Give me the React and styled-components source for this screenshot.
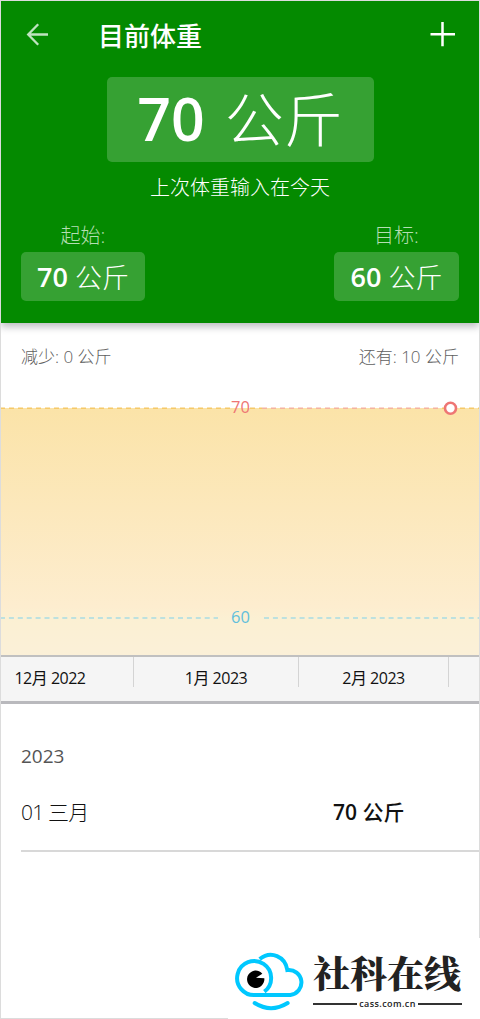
import React from 'react'
import styled, { createGlobalStyle } from 'styled-components'

const months = [
  { label: '12月 2022', width: 133, shift: 34 },
  { label: '1月 2023', width: 165, shift: 0 },
  { label: '2月 2023', width: 150, shift: 0 },
]

const App = () => {
  return (
    <>
      <GlobalStyle />
      <Screen>
        <Header>
          <TopBar>
            <svg width="24" height="26" viewBox="0 0 24 26" fill="none" stroke="#bfe3bf" strokeWidth="2.3">
              <path d="M12.2 3.3 2.2 13.5 12.2 23.8M2 13.5H22" />
            </svg>
            <Title>目前体重</Title>
            <svg width="26" height="26" viewBox="0 0 26 26" stroke="#fff" strokeWidth="2.5">
              <path d="M.5 13.2H25M12.5 1V25.2" />
            </svg>
          </TopBar>
          <CurrentWeight>
            <b>70</b><span>公斤</span>
          </CurrentWeight>
          <LastEntry>上次体重输入在今天</LastEntry>
          <Goals>
            <Goal $width="124px">
              <GoalLabel>起始:</GoalLabel>
              <GoalValue><b>70</b><span>公斤</span></GoalValue>
            </Goal>
            <Goal $width="125px">
              <GoalLabel>目标:</GoalLabel>
              <GoalValue><b>60</b><span>公斤</span></GoalValue>
            </Goal>
          </Goals>
        </Header>

        <Summary>
          <span>减少: 0 公斤</span>
          <span>还有: 10 公斤</span>
        </Summary>

        <svg width="478" height="264" viewBox="1 391 478 264" fontSize="16.5">
          <defs>
            <linearGradient id="area" x1="0" y1="0" x2="0" y2="1">
              <stop offset="0" stopColor="#fbe3a8" />
              <stop offset="0.8" stopColor="#fdedcf" />
              <stop offset="0.85" stopColor="#fbf0d3" />
              <stop offset="1" stopColor="#fbf0d8" />
            </linearGradient>
          </defs>
          <rect x="1" y="408" width="478" height="248" fill="url(#area)" />
          <path d="M0 408.3H231M250 408.3H262M442 408.3H479" stroke="#f6c968" strokeWidth="1.4" strokeDasharray="5 4" />
          <path d="M262 408.3H442" stroke="#f5b3a0" strokeWidth="1.4" strokeDasharray="5 4" />
          <path d="M0 618H218M264 618H479" stroke="#a9dbe3" strokeWidth="1.6" strokeDasharray="5 3.9" />
          <text x="240.5" y="413" textAnchor="middle" fill="#ee7674">70</text>
          <text x="240.5" y="623" textAnchor="middle" fill="#62bfdc">60</text>
          <circle cx="450.5" cy="408.2" r="5.5" fill="#fff" stroke="#ee7674" strokeWidth="2.6" />
        </svg>

        <Months>
          {months.map((m) => (
            <Month key={m.label} $width={m.width} $shift={m.shift}>{m.label}</Month>
          ))}
        </Months>

        <History>
          <Year>2023</Year>
          <Entry>
            <EntryDate>01 三月</EntryDate>
            <EntryWeight><b>70</b> 公斤</EntryWeight>
          </Entry>
        </History>

        <Watermark>
          <svg width="72" height="62" viewBox="39 60 216 186" fill="none" stroke="#00c8ff" strokeWidth="12">
            <path d="M116 87C150 60 193 80 199 120A37.500 37.500 0 0 1 208 195H104A51 51 0 1 1 130 185" />
            <path d="M101 219Q150 250 200 219" strokeLinecap="round" />
            <path d="M105 143 124 131A26 26 0 1 0 130 145Z" fill="#000" stroke="none" />
          </svg>
          <Brand>
            <BrandName>社科在线</BrandName>
            <BrandUrl>cass.com.cn</BrandUrl>
          </Brand>
        </Watermark>
      </Screen>
    </>
  )
}

const GlobalStyle = createGlobalStyle`
  * {
    box-sizing: border-box;
  }

  body {
    margin: 0;
    background: #fff;
    font-family: 'Open Sans', 'Noto Sans CJK SC', sans-serif;
  }

  svg {
    display: block;
    flex: none;
  }
`

const Screen = styled.main`
  position: relative;
  width: 480px;
  height: 1019px;
  border: 1px solid #dcdcdc;
`

const Header = styled.header`
  height: 322px;
  display: flex;
  flex-direction: column;
  align-items: center;
  color: #fff;
  background: #048a00;
  box-shadow: 0 4px 7px rgba(60, 60, 75, 0.33);
  clip-path: inset(0 0 -16px 0);
`

const TopBar = styled.div`
  width: 100%;
  height: 76px;
  padding: 20px 23px 0 25px;
  display: flex;
  align-items: flex-start;
`

const Title = styled.h1`
  flex: 1;
  margin: 1px 0 0 48px;
  font-size: 26px;
  font-weight: 500;
  line-height: 28px;
`

const CurrentWeight = styled.div`
  width: 267px;
  height: 85px;
  display: flex;
  align-items: center;
  justify-content: center;
  gap: 20px;
  background: #36a133;
  border-radius: 5px;
  font-size: 59px;
  font-weight: 300;
  line-height: 85px;

  b {
    margin-top: -2px;
    font-weight: 600;
  }
`

const LastEntry = styled.p`
  margin: 12px 0 0;
  font-size: 20px;
  font-weight: 300;
  line-height: 28px;
`

const Goals = styled.div`
  width: 100%;
  padding: 21px 20px 0;
  display: flex;
  justify-content: space-between;
`

const Goal = styled.div`
  width: ${({ $width }) => $width};
  text-align: center;
`

const GoalLabel = styled.div`
  height: 29px;
  font-size: 20px;
  font-weight: 300;
  line-height: 26px;
  color: #b4deb3;
`

const GoalValue = styled.div`
  height: 49px;
  display: flex;
  align-items: center;
  justify-content: center;
  gap: 7px;
  background: #36a133;
  border-radius: 5px;
  font-size: 27px;
  font-weight: 300;
  line-height: 49px;

  b {
    font-weight: 600;
  }

  span {
    margin-top: 1px;
  }
`

const Summary = styled.div`
  height: 68px;
  padding: 21px 20px 0;
  display: flex;
  justify-content: space-between;
  font-size: 17px;
  font-weight: 300;
  line-height: 26px;
  color: #606060;
`

const Months = styled.div`
  height: 49px;
  display: flex;
  background: #f5f5f5;
  border-top: 2px solid #c0c0c0;
  border-bottom: 3px solid #b9b9bd;
`

const Month = styled.div`
  width: ${({ $width }) => $width}px;
  height: 30px;
  padding-right: ${({ $shift }) => $shift}px;
  border-right: 1px solid #d4d4d4;
  text-align: center;
  font-size: 16px;
  line-height: 42px;
  letter-spacing: -0.5px;
  color: #111;
`

const History = styled.section`
  padding: 38px 0 0 20px;
`

const Year = styled.div`
  font-size: 19px;
  line-height: 28px;
  color: #555;
`

const Entry = styled.div`
  height: 82px;
  display: flex;
  padding-top: 28px;
  border-bottom: 2px solid #d8d8d8;
  font-size: 21px;
  line-height: 28px;
  color: #111;
`

const EntryDate = styled.span`
  width: 312px;
  font-weight: 300;
  letter-spacing: -0.8px;
`

const EntryWeight = styled.span`
  font-weight: 500;

  b {
    font-weight: 600;
  }
`

const Watermark = styled.footer`
  position: absolute;
  left: 227px;
  top: 937px;
  width: 252px;
  height: 81px;
  padding: 12px 0 0 6px;
  display: flex;
  background: #fff;
  box-shadow: 1px 1px 0 #fff;
`

const Brand = styled.div`
  width: 149px;
  margin-left: 7px;
`

const BrandName = styled.div`
  height: 48px;
  font-family: 'Noto Serif CJK SC', 'Noto Serif SC', 'Noto Sans CJK SC', serif;
  font-size: 37px;
  font-weight: 900;
  line-height: 45px;
  color: #222;
`

const BrandUrl = styled.div`
  display: flex;
  align-items: center;
  gap: 2px;
  font-family: 'Open Sans', sans-serif;
  font-size: 9px;
  font-weight: 600;
  letter-spacing: 0.4px;
  line-height: 11px;
  color: #222;

  &::before,
  &::after {
    content: '';
    flex: 1;
    height: 2px;
    background: #333;
  }
`

export default App
